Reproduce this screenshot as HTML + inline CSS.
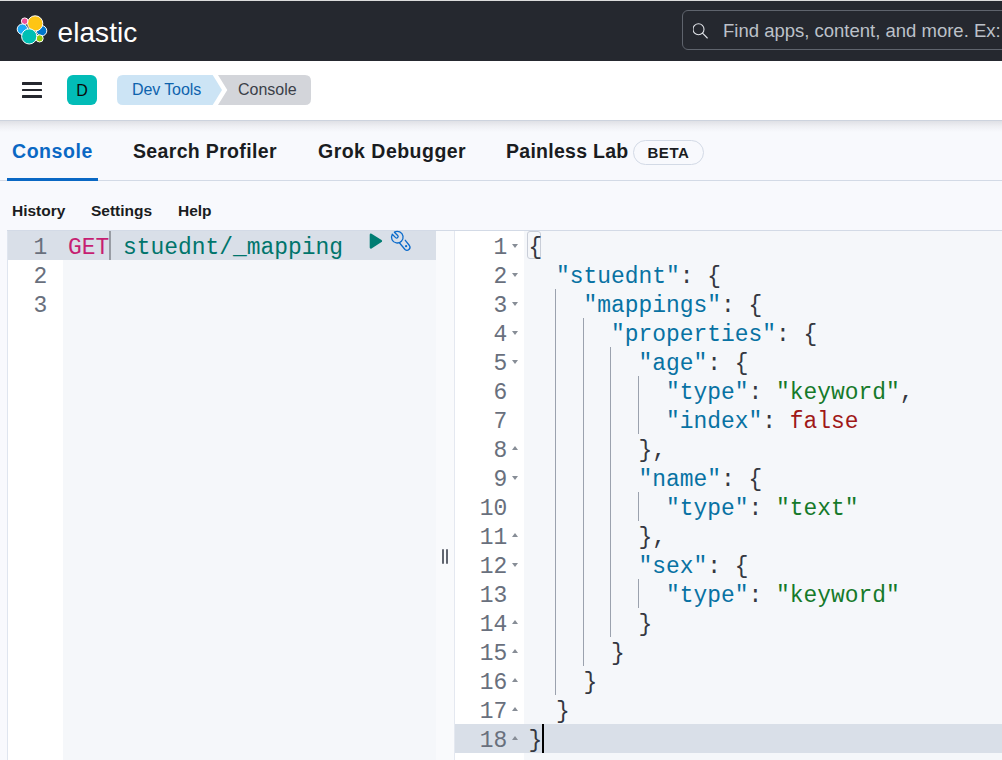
<!DOCTYPE html>
<html><head><meta charset="utf-8">
<style>
*{margin:0;padding:0;box-sizing:border-box}
html,body{width:1002px;height:760px;overflow:hidden;background:#f8f9fd;font-family:"Liberation Sans",sans-serif;position:relative}
.abs{position:absolute}
#topline{left:0;top:0;width:1002px;height:1px;background:#dcdcdc}
#hdr{left:0;top:1px;width:1002px;height:60px;background:#25282f}
#brand{left:57.5px;top:16.5px;color:#fff;font-size:28px;letter-spacing:0.08px}
#search{left:682px;top:10px;width:340px;height:40px;border:1px solid #5f646d;border-radius:6px;background:#25282f}
#search .ph{left:40px;top:9px;color:#bcc1c9;font-size:18.5px;white-space:nowrap}
#nav{left:0;top:61px;width:1002px;height:59px;background:#fff}
#navb{left:0;top:120px;width:1002px;height:1px;background:#cdd3de}
#navsh{left:0;top:121px;width:1002px;height:11px;background:linear-gradient(rgba(60,60,70,.13),rgba(60,60,70,.05) 50%,rgba(60,60,70,0))}
.ham{left:22px;width:20px;height:2.5px;background:#25272e;border-radius:.5px}
#avatar{left:67px;top:75px;width:30px;height:30px;border-radius:6px;background:#02bcb7;color:#0a0a0a;font-size:16px;text-align:center;line-height:32px}
.crumb{font-size:16px;white-space:nowrap}
.tab{top:140px;font-weight:bold;font-size:19.5px;color:#1a1c21;white-space:nowrap}
#tabline{left:0;top:180px;width:1002px;height:1px;background:#d3dae6}
#tabul{left:7px;top:178px;width:91px;height:3px;background:#0a68c4}
#beta{left:633px;top:140px;width:71px;height:25px;border:1px solid #d3dae6;border-radius:13px;font-size:15px;font-weight:bold;color:#1a1c21;text-align:center;line-height:23px;letter-spacing:0.6px}
.menu{top:202px;font-weight:bold;font-size:15.5px;color:#1a1c21}
#edtop{left:7px;top:230px;width:995px;height:1px;background:#d3dae6}
#lgut{left:7px;top:231px;width:56px;height:529px;background:#fff;border-left:1px solid #dfe5ef}
#lcont{left:63px;top:231px;width:373px;height:529px;background:#f5f7fa}
#resz{left:436px;top:231px;width:18px;height:529px;background:#f9fafc}
#rborder{left:454px;top:231px;width:1px;height:529px;background:#e4e8f0}
#rgut{left:455px;top:231px;width:69px;height:529px;background:#fff}
#rcont{left:524px;top:231px;width:478px;height:529px;background:#f5f7fa}
.hl{background:#d9dfe8;height:29px}
.mono{font-family:"Liberation Mono",monospace;font-size:22.92px;line-height:29px;white-space:pre}
.mono>div{height:29px;transform:scaleY(1.067);transform-origin:0 20.6px}
.ln{color:#69707d;text-align:right}
.bar{width:2px;height:15px;background:#60656f;border-radius:1px}
.guide{width:1px;background:#9ba2ae}
.k{color:#0872a3}.s{color:#157a2a}.p{color:#343741}.f{color:#a01818}
.fold{width:0;height:0;border-left:3.5px solid transparent;border-right:3.5px solid transparent}
.fd{border-top:4px solid #878d96}
.fu{border-bottom:4px solid #878d96}
</style></head>
<body>
<div id="topline" class="abs"></div>
<div id="hdr" class="abs"></div>
<svg class="abs" style="left:15px;top:13px" width="34" height="34" viewBox="15 13 34 34">
  <g stroke="#fff" stroke-width="1">
    <circle cx="24.7" cy="21.2" r="3.3" fill="#f04e98"/>
    <circle cx="22.4" cy="29.2" r="5.2" fill="#1ba9f5"/>
    <circle cx="41.6" cy="30.8" r="5.2" fill="#0077cc"/>
    <circle cx="39.6" cy="38.4" r="3.6" fill="#93c90e"/>
    <circle cx="35.2" cy="23.4" r="7.6" fill="#fec514"/>
    <circle cx="29.2" cy="36.4" r="7.6" fill="#00bfb3"/>
  </g>
</svg>
<div id="brand" class="abs">elastic</div>
<div id="search" class="abs">
  <svg class="abs" style="left:10px;top:12px" width="17" height="17" viewBox="0 0 17 17"><circle cx="5.5" cy="6.2" r="5.5" fill="none" stroke="#e0e3e8" stroke-width="1.1"/><path d="M9.5 10.2 L14.3 15" stroke="#e0e3e8" stroke-width="1.1" stroke-linecap="round"/></svg>
  <div class="ph abs">Find apps, content, and more. Ex: Discover</div>
</div>

<div id="nav" class="abs"></div><div id="navb" class="abs"></div><div id="navsh" class="abs"></div>
<div class="ham abs" style="top:82.3px"></div>
<div class="ham abs" style="top:88.7px"></div>
<div class="ham abs" style="top:95px"></div>
<div id="avatar" class="abs">D</div>
<svg class="abs" style="left:0;top:0" width="320" height="110" viewBox="0 0 320 110">
  <path d="M123 75 H212.7 L222 90 L212.7 105 H123 Q117 105 117 99 V81 Q117 75 123 75 Z" fill="#cce4f5"/>
  <path d="M218 75 H305 Q311 75 311 81 V99 Q311 105 305 105 H218 L227.3 90 Z" fill="#d3d5da"/>
</svg>
<div class="abs crumb" style="left:132px;top:81px;color:#0e63ad;letter-spacing:-0.1px">Dev Tools</div>
<div class="abs crumb" style="left:238px;top:81px;color:#3b3f48">Console</div>

<div class="tab abs" style="left:12px;color:#0a68c4;letter-spacing:0.55px">Console</div>
<div class="tab abs" style="left:133px;letter-spacing:0.34px">Search Profiler</div>
<div class="tab abs" style="left:318px;letter-spacing:0.48px">Grok Debugger</div>
<div class="tab abs" style="left:506px;letter-spacing:0.27px">Painless Lab</div>
<div id="beta" class="abs">BETA</div>
<div id="tabline" class="abs"></div>
<div id="tabul" class="abs"></div>

<div class="menu abs" style="left:12px">History</div>
<div class="menu abs" style="left:91px">Settings</div>
<div class="menu abs" style="left:178px">Help</div>

<div id="edtop" class="abs"></div>
<div id="lgut" class="abs"></div>
<div id="lcont" class="abs"></div>
<div id="resz" class="abs"></div>
<div id="rborder" class="abs"></div>
<div id="rgut" class="abs"></div>
<div id="rcont" class="abs"></div>

<div class="abs hl" style="left:8px;top:231px;width:428px"></div>
<div class="abs hl" style="left:455px;top:724px;width:547px"></div>
<div class="abs mono ln" style="left:7.2px;top:234px;width:40px"><div>1</div><div>2</div><div>3</div></div>
<div class="abs mono" style="left:68px;top:234px"><div><span style="color:#c61e72">GET</span> <span style="color:#00756c">stuednt/_mapping</span></div></div>
<div class="abs" style="left:109px;top:231px;width:2px;height:29px;background:#989ca4"></div>
<svg class="abs" style="left:368px;top:232px" width="16" height="18" viewBox="0 0 16 18"><path d="M2.9 2.7 L12.9 9 L2.9 15.4 Z" fill="#017d73" stroke="#017d73" stroke-width="2.4" stroke-linejoin="round"/></svg>
<svg class="abs" style="left:388px;top:229px" width="26" height="26" viewBox="0 0 26 26" fill="none" stroke="#0b6bcb" stroke-width="1.3" stroke-linecap="round" stroke-linejoin="round">
<path d="M6.4 3.18 L9.72 6.5 A1.5 1.5 0 0 1 7.6 8.62 L4.28 5.3 A5.8 5.8 0 1 0 6.4 3.18 Z"/>
<path d="M11.6 14.0 L17.0 20.5 A3 3 0 0 0 21.4 16.5 L17.3 11.3"/>
<circle cx="18.1" cy="17.2" r="1.15" fill="#0b6bcb" stroke="none"/>
</svg>
<div class="abs" style="left:442px;top:549px" ></div>
<div class="abs bar" style="left:442px;top:549.4px"></div>
<div class="abs bar" style="left:446px;top:549.4px"></div>
<div class="abs guide" style="left:555px;top:289px;height:406px"></div>
<div class="abs guide" style="left:583px;top:318px;height:348px"></div>
<div class="abs guide" style="left:610px;top:347px;height:290px"></div>
<div class="abs guide" style="left:638px;top:376px;height:58px"></div>
<div class="abs guide" style="left:638px;top:492px;height:29px"></div>
<div class="abs guide" style="left:638px;top:579px;height:29px"></div>

<div class="abs" style="left:527.3px;top:231px;width:13.5px;height:27.5px;border:1px solid #c9ced8;border-radius:3px"></div>
<div class="abs mono ln" style="left:454.3px;top:234px;width:53px"><div>1</div><div>2</div><div>3</div><div>4</div><div>5</div><div>6</div><div>7</div><div>8</div><div>9</div><div>10</div><div>11</div><div>12</div><div>13</div><div>14</div><div>15</div><div>16</div><div>17</div><div>18</div></div>
<div class="abs fold fd" style="left:511.5px;top:244px"></div>
<div class="abs fold fd" style="left:511.5px;top:273px"></div>
<div class="abs fold fd" style="left:511.5px;top:302px"></div>
<div class="abs fold fd" style="left:511.5px;top:331px"></div>
<div class="abs fold fd" style="left:511.5px;top:360px"></div>
<div class="abs fold fd" style="left:511.5px;top:476px"></div>
<div class="abs fold fd" style="left:511.5px;top:563px"></div>
<div class="abs fold fu" style="left:511.5px;top:446px"></div>
<div class="abs fold fu" style="left:511.5px;top:533px"></div>
<div class="abs fold fu" style="left:511.5px;top:620px"></div>
<div class="abs fold fu" style="left:511.5px;top:649px"></div>
<div class="abs fold fu" style="left:511.5px;top:678px"></div>
<div class="abs fold fu" style="left:511.5px;top:707px"></div>
<div class="abs fold fu" style="left:511.5px;top:736px"></div>

<div class="abs mono p" style="left:528.5px;top:234px"><div><span class="p">{</span></div><div><span class="p">  </span><span class="k">"stuednt"</span><span class="p">: {</span></div><div><span class="p">    </span><span class="k">"mappings"</span><span class="p">: {</span></div><div><span class="p">      </span><span class="k">"properties"</span><span class="p">: {</span></div><div><span class="p">        </span><span class="k">"age"</span><span class="p">: {</span></div><div><span class="p">          </span><span class="k">"type"</span><span class="p">: </span><span class="s">"keyword"</span><span class="p">,</span></div><div><span class="p">          </span><span class="k">"index"</span><span class="p">: </span><span class="f">false</span></div><div><span class="p">        },</span></div><div><span class="p">        </span><span class="k">"name"</span><span class="p">: {</span></div><div><span class="p">          </span><span class="k">"type"</span><span class="p">: </span><span class="s">"text"</span></div><div><span class="p">        },</span></div><div><span class="p">        </span><span class="k">"sex"</span><span class="p">: {</span></div><div><span class="p">          </span><span class="k">"type"</span><span class="p">: </span><span class="s">"keyword"</span></div><div><span class="p">        }</span></div><div><span class="p">      }</span></div><div><span class="p">    }</span></div><div><span class="p">  }</span></div><div><span class="p">}</span></div></div>
<div class="abs" style="left:541.5px;top:724px;width:2.2px;height:29px;background:#000"></div>
</body></html>
